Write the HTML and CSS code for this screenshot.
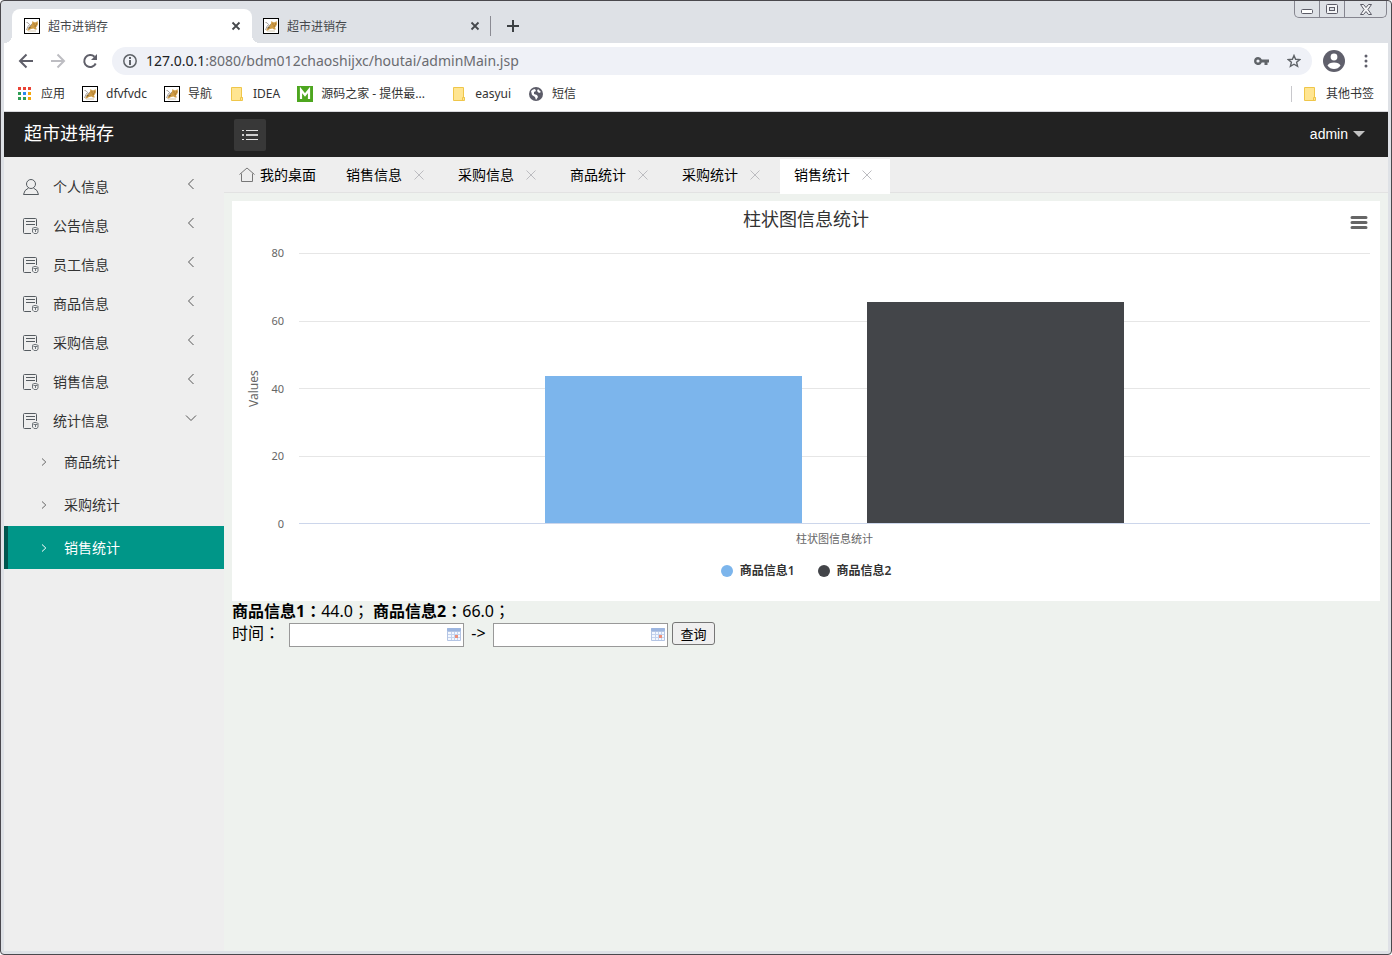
FILE: index.html
```html
<!DOCTYPE html>
<html lang="zh-CN">
<head>
<meta charset="utf-8">
<title>超市进销存</title>
<link rel="stylesheet" href="styles.css">
</head>
<body>
<svg class="defs" aria-hidden="true">
  <symbol id="cat" viewBox="0 0 16 16">
    <rect x=".5" y=".5" width="15" height="15" fill="#fff" stroke="#000"/>
    <path d="M8 5.500L8.500 3l1.500 1.200h2L13.500 3l.5 3-1 2.200-1 1 .8 2.300H11L9.500 10.500l-2.500.5-2.500 1.500H3l1.500-2.500L6 8z" fill="#cf9c45"/>
    <path d="M2.500 4.500l1.500.3L5.500 6.500 4 8.500 2.500 12M5.500 8L8 6.500" fill="none" stroke="#8d8781" stroke-width=".8"/>
    <path d="M4 10l2-1.500 1 .8-1.500 1.500z" fill="#7d6540"/>
    <path d="M4 13h8" stroke="#c9b99a" stroke-width=".8"/>
    <path d="M9.500 6h1M12 6h1M10.500 8h1.500" stroke="#8a5a20" stroke-width=".8"/>
  </symbol>
  <symbol id="folder" viewBox="0 0 16 16">
    <path d="M2.500 1.500h10v10h1v3h-11z" fill="#ffe591" stroke="#efc64a"/>
    <path d="M11.500 14.500v-3h2" fill="none" stroke="#efc64a"/>
  </symbol>
  <symbol id="close" viewBox="0 0 10 10"><path d="M1.500 1.500l7 7M8.500 1.500l-7 7" fill="none" stroke="#45484c" stroke-width="1.800"/></symbol>
  <symbol id="thinx" viewBox="0 0 10 10"><path d="M.5.5l9 9M9.500.5l-9 9" fill="none" stroke="#bcbcc0"/></symbol>
  <symbol id="doc" viewBox="0 0 16 16" fill="none" stroke="#555b60">
    <path d="M13.500 8V1.500q0-1-1-1h-11q-1 0-1 1v13q0 1 1 1H8"/>
    <path d="M3 3.500h9M3 6.500h9"/>
    <path d="M9 10.500l3-1.200 3.500 1.200M9.500 11v3l1.500 1.500h3l1-1.500v-3M10.500 11.500h4M12.500 11.500V14" stroke="#70767b"/>
  </symbol>
  <symbol id="left" viewBox="0 0 8 12"><path d="M6.500 1l-5 5 5 5" fill="none" stroke="#555"/></symbol>
  <symbol id="right" viewBox="0 0 6 8"><path d="M1 .5L4.800 4 1 7.500" fill="none" stroke="currentColor"/></symbol>
  <symbol id="calendar" viewBox="0 0 14 13">
    <rect width="14" height="13" rx="1" fill="#b4c5e4"/><rect width="14" height="3" rx="1" fill="#9db6e0"/>
    <path d="M1 4h12v8H1z" fill="#f4f8ff"/>
    <path d="M1 6.500h12M1 9.500h12M4.500 4v8M7.500 4v8M10.500 4v8" stroke="#c4d3ee"/>
    <path d="M8 7h3v3H8z" fill="#ec8e79"/>
  </symbol>
</svg>

<div class="window">
  <header class="chrome">
    <div class="tabstrip">
      <div class="btab btab-active"><svg class="i16"><use href="#cat"/></svg><span>超市进销存</span><button class="bclose" aria-label="关闭标签页"><svg class="i10"><use href="#close"/></svg></button></div>
      <div class="btab"><svg class="i16"><use href="#cat"/></svg><span>超市进销存</span><button class="bclose" aria-label="关闭标签页"><svg class="i10"><use href="#close"/></svg></button></div>
      <button class="newtab" aria-label="新标签页"><svg width="12" height="12" viewBox="0 0 12 12"><path d="M6 0v12M0 6h12" stroke="#3c4043" stroke-width="2"/></svg></button>
      <div class="winctl">
        <button aria-label="最小化"><svg width="12" height="5" viewBox="0 0 12 5"><rect x=".5" y=".5" width="11" height="4" rx="1" fill="#fff" stroke="#5b5b66"/></svg></button>
        <button aria-label="最大化"><svg width="12" height="10" viewBox="0 0 12 10"><rect x=".5" y=".5" width="11" height="9" rx="1" fill="#f4f5f7" stroke="#5b5b66"/><rect x="3.500" y="3.500" width="5" height="3" fill="#dee1e6" stroke="#5b5b66"/></svg></button>
        <button aria-label="关闭"><svg width="12" height="11" viewBox="0 0 12 11"><path d="M.5.5h3L6 3.500 8.500.5h3L8 5.500l3.500 5h-3L6 7.500l-2.500 3h-3L4 5.500z" fill="#f4f5f7" stroke="#5b5b66"/></svg></button>
      </div>
    </div>
    <div class="toolbar">
      <button aria-label="后退"><svg class="i16" viewBox="0 0 16 16"><path d="M15 8H2M8.500 1.500L2 8l6.500 6.500" fill="none" stroke="#5f5f69" stroke-width="2"/></svg></button>
      <button aria-label="前进"><svg class="i16" viewBox="0 0 16 16"><path d="M1 8h13M7.500 1.500L14 8l-6.500 6.500" fill="none" stroke="#bdbdc2" stroke-width="2"/></svg></button>
      <button aria-label="重新加载"><svg class="i16" viewBox="0 0 16 16"><path d="M13.700 10.500A6 6 0 1 1 12.500 3.800" fill="none" stroke="#5f5f69" stroke-width="2"/><path d="M15 1v6H9z" fill="#5f5f69"/></svg></button>
      <div class="omnibox">
        <svg width="14" height="14" viewBox="0 0 14 14"><circle cx="7" cy="7" r="6.200" fill="none" stroke="#5f6368" stroke-width="1.500"/><path d="M7 6v5M7 3v2" stroke="#5f6368" stroke-width="2"/></svg>
        <span class="url"><b>127.0.0.1</b>:8080/bdm012chaoshijxc/houtai/adminMain.jsp</span>
        <svg width="15" height="8" viewBox="0 0 15 8"><path fill-rule="evenodd" d="M4 0a4 4 0 0 1 3.800 2.500H15v3h-1.500V8h-3V5.500H7.800A4 4 0 1 1 4 0zM4 2.400a1.600 1.600 0 1 0 0 3.200 1.600 1.600 0 0 0 0-3.200z" fill="#5f6368"/></svg>
        <svg width="14" height="14" viewBox="0 0 14 14"><path d="M7 1.500l1.600 3.800 4.200.3-3.200 2.700 1 4L7 10.200l-3.600 2.100 1-4L1.200 5.600l4.200-.3z" fill="none" stroke="#5f6368" stroke-width="1.400"/></svg>
      </div>
      <button class="avatar" aria-label="用户"><svg width="22" height="22" viewBox="0 0 22 22"><circle cx="11" cy="11" r="11" fill="#5f5f6b"/><circle cx="11" cy="7" r="3.400" fill="#fff"/><path d="M4.500 15.500Q6 12.500 11 12.500t6.500 3q-2.500 3.500-6.500 3.500t-6.500-3.500z" fill="#fff"/></svg></button>
      <button aria-label="菜单"><svg width="4" height="14" viewBox="0 0 4 14" fill="#5f5f6b"><circle cx="2" cy="2" r="1.500"/><circle cx="2" cy="7" r="1.500"/><circle cx="2" cy="12" r="1.500"/></svg></button>
    </div>
    <nav class="bookmarks">
      <a href="#"><svg class="i16" viewBox="0 0 16 16"><path d="M1 1h3v3H1zM6 1h3v3H6zM11 1h3v3h-3z" fill="#ea4335"/><path d="M1 6h3v3H1zM1 11h3v3H1zM6 11h3v3H6z" fill="#2f9e55"/><path d="M6 6h3v3H6z" fill="#2a8af0"/><path d="M11 6h3v3h-3zM11 11h3v3h-3z" fill="#f5a70a"/></svg>应用</a>
      <a href="#"><svg class="i16"><use href="#cat"/></svg>dfvfvdc</a>
      <a href="#"><svg class="i16"><use href="#cat"/></svg>导航</a>
      <a href="#"><svg class="i16"><use href="#folder"/></svg>IDEA</a>
      <a href="#"><svg class="i16" viewBox="0 0 16 16"><path d="M0 0h16v16H0z" fill="#4da61f"/><path d="M4 13V4l4 5 4-5v9" fill="none" stroke="#fff" stroke-width="2.200"/></svg><span class="long">源码之家 - 提供最...</span></a>
      <a href="#"><svg class="i16"><use href="#folder"/></svg>easyui</a>
      <a href="#"><svg class="i16" viewBox="0 0 16 16"><circle cx="8" cy="8" r="7" fill="#5c5c68"/><path d="M3 5q2-2 4-2l1 2-2 1v2l3 1 1 2-2 3-1-3-3-2zM10 3l3 3-2 1-2-2z" fill="#fff"/></svg>短信</a>
      <a href="#" class="other"><svg class="i16"><use href="#folder"/></svg>其他书签</a>
    </nav>
  </header>

  <header class="apphead">
    <h1>超市进销存</h1>
    <button class="fold" aria-label="折叠菜单"><svg width="16" height="12" viewBox="0 0 16 12"><path d="M4 1.500h12M4 10.500h12M0 1.500h2M0 10.500h2" stroke="#e4e4e4"/><path d="M4 6h12M0 6h2" stroke="#d0d0d0" stroke-width="2"/></svg></button>
    <button class="user">admin<svg width="12" height="6" viewBox="0 0 12 6"><path d="M0 0h12L6 6z" fill="#c2c2c2"/></svg></button>
  </header>

  <div class="app">
    <nav class="side">
      <a href="#"><svg class="i16" viewBox="0 0 16 16" fill="none" stroke="#555b60"><circle cx="8" cy="5" r="4.500"/><path d="M5.500 9Q1 11 .5 15.500h15Q15 11 10.500 9"/></svg>个人信息<svg class="arrow"><use href="#left"/></svg></a>
      <a href="#"><svg class="i16"><use href="#doc"/></svg>公告信息<svg class="arrow"><use href="#left"/></svg></a>
      <a href="#"><svg class="i16"><use href="#doc"/></svg>员工信息<svg class="arrow"><use href="#left"/></svg></a>
      <a href="#"><svg class="i16"><use href="#doc"/></svg>商品信息<svg class="arrow"><use href="#left"/></svg></a>
      <a href="#"><svg class="i16"><use href="#doc"/></svg>采购信息<svg class="arrow"><use href="#left"/></svg></a>
      <a href="#"><svg class="i16"><use href="#doc"/></svg>销售信息<svg class="arrow"><use href="#left"/></svg></a>
      <a href="#"><svg class="i16"><use href="#doc"/></svg>统计信息<svg class="arrow down"><use href="#left"/></svg></a>
      <div class="sub">
        <a href="#"><svg class="chev"><use href="#right"/></svg>商品统计</a>
        <a href="#"><svg class="chev"><use href="#right"/></svg>采购统计</a>
        <a href="#" class="on"><svg class="chev"><use href="#right"/></svg>销售统计</a>
      </div>
    </nav>

    <main class="main">
      <div class="tabs">
        <div class="tab home"><svg class="i16" viewBox="0 0 16 16" fill="none" stroke="#777"><path d="M.5 7.500L8 1l7.500 6.500M2.500 6.500v8h11v-8"/></svg><a href="#">我的桌面</a></div>
        <div class="tab"><a href="#">销售信息</a><button aria-label="关闭"><svg class="i10"><use href="#thinx"/></svg></button></div>
        <div class="tab"><a href="#">采购信息</a><button aria-label="关闭"><svg class="i10"><use href="#thinx"/></svg></button></div>
        <div class="tab"><a href="#">商品统计</a><button aria-label="关闭"><svg class="i10"><use href="#thinx"/></svg></button></div>
        <div class="tab"><a href="#">采购统计</a><button aria-label="关闭"><svg class="i10"><use href="#thinx"/></svg></button></div>
        <div class="tab current"><a href="#">销售统计</a><button aria-label="关闭"><svg class="i10"><use href="#thinx"/></svg></button></div>
      </div>

      <div class="content">
        <section class="chart">
          <h2>柱状图信息统计</h2>
          <button class="export" aria-label="图表菜单"><svg width="18" height="14" viewBox="0 0 18 14"><path d="M2 2.500h14M2 7.500h14M2 12.500h14" stroke="#666" stroke-width="3" stroke-linecap="round"/></svg></button>
          <div class="chartgrid">
            <div class="ytitle">Values</div>
            <div class="ylabels"><span>80</span><span>60</span><span>40</span><span>20</span><span>0</span></div>
            <div class="plot">
              <div class="lines"><i></i><i></i><i></i><i></i></div>
              <div class="bars"><div class="bar blue" style="height:54.500%"></div><div class="bar dark" style="height:82%"></div></div>
            </div>
            <div class="xlabel">柱状图信息统计</div>
          </div>
          <div class="legend"><span><i class="blue"></i>商品信息1</span><span><i class="dark"></i>商品信息2</span></div>
        </section>
        <p class="sum"><b>商品信息1<span class="mark" lang="zh-TW">：</span></b>44.0<span class="mark" lang="zh-TW">；</span> <b>商品信息2<span class="mark" lang="zh-TW">：</span></b>66.0<span class="mark" lang="zh-TW">；</span></p>
        <form class="query">
          <label for="from">时间<span class="mark" lang="zh-TW">：</span></label>
          <span class="date"><input id="from" type="text"><svg><use href="#calendar"/></svg></span>
          <label class="to" for="until">-&gt;</label>
          <span class="date"><input id="until" type="text"><svg><use href="#calendar"/></svg></span>
          <button type="button">查询</button>
        </form>
      </div>
    </main>
  </div>
</div>
</body>
</html>
```

FILE: styles.css
```css
* { box-sizing: border-box; }
body { margin: 0; font: 14px/20px "Noto Sans", "Noto Sans CJK SC", sans-serif; color: #333; background: #fff; }
a { color: inherit; text-decoration: none; }
button { font: inherit; color: inherit; border: 0; padding: 0; background: none; display: flex; align-items: center; justify-content: center; }
svg { display: block; flex: none; }
h1, h2, p { margin: 0; font-weight: 400; }
.defs { position: absolute; width: 0; height: 0; }
.i16 { width: 16px; height: 16px; }
.i10 { width: 10px; height: 10px; }

.window { min-height: 100vh; display: flex; flex-direction: column; background: #dee1e6; border: 1px solid #4a484d; border-radius: 4px; padding: 0 3px 3px; }

.tabstrip { height: 42px; display: flex; align-items: flex-end; padding-left: 8px; font-size: 12px; }
.btab { position: relative; width: 239px; height: 34px; display: flex; align-items: center; gap: 8px; padding: 0 11px; color: #45484c; }
.btab span { padding-top: 2px; }
.btab:not(.btab-active)::after { content: ""; position: absolute; right: 0; top: 7px; width: 1px; height: 20px; background: #8b8b93; }
.btab-active { background: #fff; border-radius: 8px 8px 0 0; width: 240px; padding-left: 12px; }
.btab-active::before, .btab-active::after { content: ""; position: absolute; bottom: 0; width: 8px; height: 8px; }
.btab-active::before { left: -8px; background: radial-gradient(circle at 0 0, #dee1e6 8px, #fff 8px); }
.btab-active::after { right: -8px; background: radial-gradient(circle at 100% 0, #dee1e6 8px, #fff 8px); }
.bclose { margin-left: auto; }
.newtab { width: 44px; height: 34px; }
.winctl { margin-left: auto; margin-right: 1px; align-self: flex-start; display: flex; border: 1px solid #85858f; border-top: 0; border-radius: 0 0 5px 5px; }
.winctl button { width: 25px; height: 16px; border-right: 1px solid #85858f; }
.winctl button:first-child { align-items: flex-end; padding-bottom: 3px; }
.winctl button:last-child { width: 41px; border-right: 0; }

.toolbar { height: 36px; display: flex; align-items: center; gap: 16px; padding: 0 20px 0 14px; background: #fff; }
.omnibox { flex: 1; height: 28px; display: flex; align-items: center; gap: 18px; padding: 0 11px; margin: 0 -5px 0 -2px; border-radius: 14px; background: #eff1f7; }
.url { flex: 1; margin-left: -9px; font-size: 14px; color: #6a6b70; }
.url b { font-weight: 400; color: #202124; }
.avatar { margin-right: 3px; }

.bookmarks { height: 33px; display: flex; align-items: center; gap: 17px; padding: 0 14px 3px 13px; font-size: 12px; background: #fff; border-bottom: 1px solid #d8d8dc; }
.bookmarks a { display: flex; align-items: center; gap: 8px; white-space: nowrap; }
.long { width: 113px; }
.bookmarks .other { margin-left: auto; border-left: 1px solid #c8c8cc; height: 16px; padding-left: 10px; }

.apphead { height: 45px; display: flex; align-items: center; padding-right: 23px; background: #222; color: #fff; }
.apphead h1 { width: 230px; padding: 0 0 3px 20px; font-size: 18px; line-height: 24px; }
.fold { width: 32px; height: 32px; border-radius: 2px; background: #383838; }
.user { margin-left: auto; padding-bottom: 2px; gap: 5px; font-family: "Liberation Sans", sans-serif; }

.app { flex: 1; display: flex; }
.side { width: 220px; padding-top: 10px; background: #eee; }
.side > a { height: 39px; display: flex; align-items: center; gap: 14px; padding: 0 29px 0 19px; }
.arrow { width: 8px; height: 12px; margin: 0 0 5px auto; }
.down { transform: rotate(-90deg); }
.sub a { height: 43px; display: flex; align-items: center; gap: 17px; padding-left: 33px; border-left: 4px solid transparent; }
.chev { width: 6px; height: 8px; color: #666; }
.sub .on { background: #009688; border-color: #00564e; color: #fff; }
.on .chev { color: #fff; }

.main { flex: 1; min-width: 0; background: #eef2ee; }
.tabs { height: 36px; display: flex; gap: 2px; padding-top: 2px; background: #eee; border-bottom: 1px solid #e2e2e2; color: #000; }
.tab { width: 110px; height: 35px; display: flex; align-items: center; gap: 12px; padding: 0 14px 3px; }
.home { width: 106px; gap: 5px; padding: 0 0 3px 15px; }
.current { background: #fff; }

.content { padding: 8px; }
.chart { position: relative; height: 400px; padding: 6px 10px 0; background: #fff; }
.chart h2 { text-align: center; font-size: 18px; line-height: 24px; }
.export { position: absolute; right: 12px; top: 14px; }
.chartgrid { display: grid; grid-template-columns: 12px 24px 1fr; grid-template-rows: 271px auto; margin: 22px 0 0 6px; font-size: 11px; color: #666; }
.ytitle { writing-mode: vertical-rl; transform: rotate(180deg); text-align: center; line-height: 12px; font-size: 12px; }
.ylabels { display: flex; flex-direction: column; justify-content: space-between; text-align: right; line-height: 14px; margin: -7px 0; }
.plot { display: grid; margin-left: 15px; }
.lines, .bars { grid-area: 1 / 1; display: flex; }
.lines { flex-direction: column; border-bottom: 1px solid #ccd6eb; }
.lines i { flex: 1; border-top: 1px solid #e6e6e6; }
.bars { align-items: flex-end; justify-content: space-between; padding: 0 23% 1px; }
.bar { width: 44.400%; }
.blue { background: #7cb5ec; }
.dark { background: #434549; }
.xlabel { grid-column: 3; margin: 7px 0 0 15px; line-height: 16px; text-align: center; }
.legend { display: flex; justify-content: center; gap: 23px; margin-top: 15px; font-size: 12px; line-height: 18px; font-weight: 600; }
.legend span { display: flex; align-items: center; gap: 7px; }
.legend i { width: 12px; height: 12px; border-radius: 50%; }

.sum { font-size: 16px; line-height: 21px; color: #000; }
.mark { font-family: "Noto Sans CJK TC", sans-serif; line-height: 1; }
.query { display: flex; align-items: flex-start; font-size: 16px; line-height: 22px; color: #000; }
.query label { width: 57px; }
.query .to { width: 29px; text-align: center; }
.date { position: relative; display: flex; margin-top: 1px; }
.date input { width: 175px; height: 24px; border: 1px solid #999; background: #fff; padding: 0 24px 0 4px; font: inherit; }
.date svg { position: absolute; right: 3px; top: 5px; width: 14px; height: 13px; }
.query button { width: 43px; height: 23px; margin-left: 4px; border: 1px solid #767676; border-radius: 3px; background: #efefef; font-size: 13px; }
```
